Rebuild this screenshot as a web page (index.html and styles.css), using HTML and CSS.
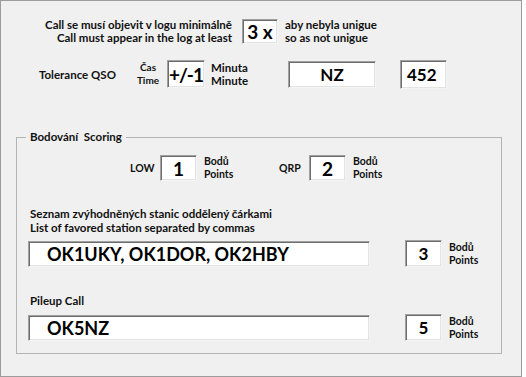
FILE: index.html
```html
<!DOCTYPE html>
<html lang="cs">
<head>
    <meta charset="UTF-8">
    <title>Nastavení soutěže</title>
    <link rel="stylesheet" href="styles.css">
</head>
<body>
    <div class="window">
        <!-- Minimální počet výskytů -->
        <div class="row row-min">
            <div class="label-right">Call se musí objevit v logu minimálně<br>Call must appear in the log at least</div>
            <div class="box box-min">3 x</div>
            <div class="label-two">aby nebyla unigue<br>so as not unigue</div>
        </div>

        <!-- Tolerance -->
        <div class="row row-tol">
            <div class="tol-label">Tolerance QSO</div>
            <div class="cas-label">Čas<br>Time</div>
            <div class="box box-tol">+/-1</div>
            <div class="label-two minuta">Minuta<br>Minute</div>
            <div class="box box-nz">NZ</div>
            <div class="box box-num">452</div>
        </div>

        <fieldset class="group">
            <legend>Bodování&nbsp; Scoring</legend>

            <div class="row row-power">
                <div class="power-label low">LOW</div>
                <div class="box box-pts">1</div>
                <div class="small-label pts-low">Bodů<br>Points</div>
                <div class="power-label">QRP</div>
                <div class="box box-pts">2</div>
                <div class="small-label">Bodů<br>Points</div>
            </div>

            <div class="list-label">Seznam zvýhodněných stanic oddělený čárkami<br>List of favored station separated by commas</div>
            <div class="row row-field">
                <div class="field">OK1UKY, OK1DOR, OK2HBY</div>
                <div class="box box-small">3</div>
                <div class="small-label">Bodů<br>Points</div>
            </div>

            <div class="list-label pileup">Pileup Call</div>
            <div class="row row-field row-pileup">
                <div class="field">OK5NZ</div>
                <div class="box box-small">5</div>
                <div class="small-label">Bodů<br>Points</div>
            </div>
        </fieldset>
    </div>
</body>
</html>
```

FILE: styles.css
```css
/* Základní nastavení */
body {
    margin: 0;
    background: #fff;
    font-family: Lato, "Open Sans", sans-serif;
    font-weight: 700;
    font-size: 11.5px;
    color: #111;
}

.window {
    width: 522px;
    height: 377px;
    box-sizing: border-box;
    border: 1px solid #9c9c9c;
    background: #f0f0f0;
    padding-top: 16px;
}

.row {
    display: flex;
    align-items: center;
    white-space: nowrap;
}

/* Pole se zapuštěným okrajem (Windows styl) */
.box,
.field {
    box-sizing: border-box;
    background: #fff;
    border: 1px solid;
    border-color: #a0a0a0 #f4f4f4 #f4f4f4 #a0a0a0;
    box-shadow: inset 1px 1px 0 #6d6d6d, inset -1px -1px 0 #e3e3e3;
    color: #000;
    font-size: 17px;
    display: flex;
    align-items: center;
    justify-content: center;
}

/* Řádek 1 */
.row-min {
    height: 28px;
    margin-left: 39px;
}

.label-right {
    width: 192px;
    text-align: right;
    line-height: 13px;
}

.label-two {
    line-height: 13px;
    margin-left: 7px;
}

.box-min {
    width: 36px;
    height: 25px;
    margin-left: 10px;
    font-size: 19px;
}

/* Řádek 2 */
.row-tol {
    height: 30px;
    margin-top: 14px;
    margin-left: 38px;
}

.tol-label {
    width: 96px;
}

.cas-label {
    width: 26px;
    text-align: center;
    font-size: 10px;
    line-height: 13px;
}

.box-tol {
    width: 38px;
    height: 28px;
    margin-left: 6px;
    font-size: 19px;
    letter-spacing: -1px;
}

.minuta {
    width: 77px;
    margin-left: 6px;
}

.box-nz {
    width: 88px;
    height: 27px;
}

.box-num {
    width: 47px;
    height: 29px;
    margin-left: 24px;
    justify-content: flex-start;
    padding-left: 6px;
}

/* Skupina Bodování */
.group {
    margin: 41px 0 0 15px;
    width: 486px;
    box-sizing: border-box;
    padding: 0 0 12px 0;
    border: 1px solid #b4b4b4;
}

.group legend {
    margin-left: 9px;
    padding: 0 4px;
    line-height: 14px;
}

.row-power {
    height: 26px;
    margin-top: 11px;
    margin-left: 113px;
}

.power-label {
    width: 30px;
    font-size: 10.5px;
}

.box-pts {
    width: 37px;
    height: 26px;
    font-size: 19px;
}

.small-label {
    font-size: 10.5px;
    line-height: 13px;
    margin-left: 7px;
}

.pts-low {
    width: 75px;
}

.list-label {
    margin: 26px 0 0 13px;
    line-height: 14px;
}

.pileup {
    margin-top: 27px;
}

.row-field {
    margin: 5px 0 0 11px;
}

.row-pileup {
    margin-top: 6px;
}

.field {
    width: 342px;
    height: 26px;
    justify-content: flex-start;
    padding-left: 18px;
    font-size: 18px;
}

.box-small {
    width: 37px;
    height: 27px;
    margin-left: 35px;
}
```
